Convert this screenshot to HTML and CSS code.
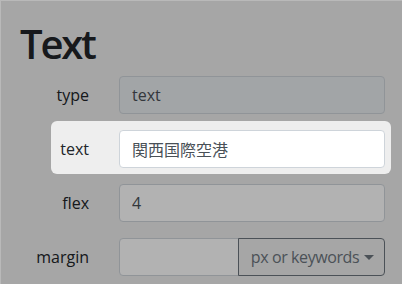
FILE: index.html
```html
<!DOCTYPE html>
<html lang="ja">
<head>
    <meta charset="UTF-8">
    <title>Text</title>
    <link rel="stylesheet" href="styles.css">
</head>
<body>
    <div class="overlay"></div>
    <div class="page">
        <h1>Text</h1>

        <div class="field">
            <label>type</label>
            <input type="text" value="text" disabled>
        </div>

        <div class="field spotlight">
            <label>text</label>
            <input type="text" class="cjk" value="関西国際空港">
        </div>

        <div class="field">
            <label>flex</label>
            <input type="text" value="4">
        </div>

        <div class="field">
            <label>margin</label>
            <div class="input-group">
                <input type="text">
                <button type="button" class="unit-btn">px or keywords <span class="caret"></span></button>
            </div>
        </div>
    </div>
</body>
</html>
```

FILE: styles.css
```css
:root {
    --text: #212529;
    --muted: #495057;
    --border: #ced4da;
    --secondary: #6c757d;
    --page: #eeeeee;
}

html, body {
    margin: 0;
    height: 100%;
}

body {
    font-family: "Open Sans", "Noto Sans", sans-serif;
    background: var(--page);
    color: var(--text);
    overflow: hidden;
}

/* tour overlay dims everything except the spotlight row */
.overlay {
    position: fixed;
    inset: 0;
    background: rgba(0, 0, 0, 0.3);
    background-clip: padding-box;
    border-top: 1px solid rgba(0, 0, 0, 0.22);
    border-left: 1px solid rgba(0, 0, 0, 0.22);
    z-index: 10;
}

.page {
    padding: 20px 17px 0 20px;
}

h1 {
    margin: 0 0 8px;
    font-size: 40px;
    font-weight: 600;
    line-height: 1.2;
    letter-spacing: -2.2px;
}

.field {
    display: grid;
    grid-template-columns: 69px 1fr;
    column-gap: 30px;
    align-items: center;
    margin-bottom: 16px;
}

.field label {
    text-align: right;
    font-size: 16px;
    color: var(--text);
}

input {
    box-sizing: border-box;
    width: 100%;
    height: 38px;
    padding: 6px 12px;
    font-family: inherit;
    font-size: 16px;
    color: var(--muted);
    background: white;
    border: 1px solid var(--border);
    border-radius: 4px;
    outline: none;
}

input:disabled {
    background: #e9ecef;
}

.cjk {
    font-family: "Open Sans", "Noto Sans CJK JP", sans-serif;
}

.spotlight {
    position: relative;
    z-index: 20;
}

.spotlight::before {
    content: "";
    position: absolute;
    top: -9px;
    bottom: -6px;
    left: 31px;
    right: -6px;
    background: var(--page);
    border-radius: 6px;
    z-index: -1;
}

.input-group {
    display: flex;
}

.input-group input {
    flex: 1;
    min-width: 0;
    border-radius: 4px 0 0 4px;
}

.unit-btn {
    box-sizing: border-box;
    flex: 0 0 147px;
    height: 38px;
    padding: 6px 10px 6px 12px;
    font-family: inherit;
    font-size: 16px;
    letter-spacing: -0.4px;
    color: var(--secondary);
    background: transparent;
    border: 1px solid var(--secondary);
    border-radius: 0 4px 4px 0;
    margin-left: -1px;
    white-space: nowrap;
    text-align: left;
}

.caret {
    display: inline-block;
    vertical-align: 3px;
    margin-left: 1px;
    border-top: 5px solid;
    border-left: 5px solid transparent;
    border-right: 5px solid transparent;
}
```
